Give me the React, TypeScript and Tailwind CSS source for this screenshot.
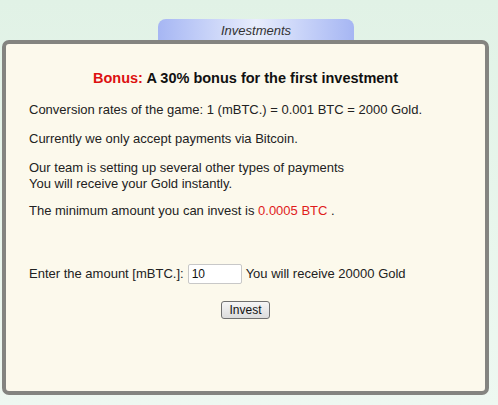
import React, { useState } from 'react'

export default function App() {
  const [amount, setAmount] = useState('10')
  const gold = (parseFloat(amount) || 0) * 2000

  return (
    <div className="min-h-[405px] w-full bg-gradient-to-b from-[#e1f2e6] to-[#eef8f1] pt-[19px] pl-[2px] font-['Liberation_Sans',Arial,sans-serif] text-[13px] leading-[16px] text-[#222]">
      <div className="ml-[156px] flex h-[22px] w-[196px] items-center justify-center rounded-t-[8px] bg-gradient-to-r from-[#a6b6f3] via-[#e8edfc] to-[#a6b6f3] pt-[1px] text-[13px] italic text-[#333]">
        Investments
      </div>
      <div className="-mt-[1px] h-[355px] w-[487px] rounded-[7px] border-4 border-[#848480] bg-[#fcf9ec] pl-[23px]">
        <p className="mt-[26px] text-center pr-[23px] text-[14.5px] font-bold leading-[17px] text-[#111]">
          <span className="text-[#dd1111]">Bonus:</span> A 30% bonus for the first investment
        </p>
        <p className="mt-[15px]">Conversion rates of the game: 1 (mBTC.) = 0.001 BTC = 2000 Gold.</p>
        <p className="mt-[13px]">Currently we only accept payments via Bitcoin.</p>
        <p className="mt-[13px]">
          Our team is setting up several other types of payments
          <br />
          You will receive your Gold instantly.
        </p>
        <p className="mt-[11px]">
          The minimum amount you can invest is <span className="text-[#e01b1b]">0.0005 BTC</span> .
        </p>
        <div className="mt-[45px] flex items-center">
          <span>Enter the amount [mBTC.]:</span>
          <input
            value={amount}
            onChange={e => setAmount(e.target.value)}
            className="ml-[4px] h-[20px] w-[54px] rounded-[2px] border border-[#c8c8c8] bg-white px-[3px] text-[12px] text-[#111] outline-none"
          />
          <span className="ml-[4px]">You will receive {gold} Gold</span>
        </div>
        <div className="mt-[17px] flex justify-center pr-[23px]">
          <button className="h-[18px] rounded-[3px] border border-[#707070] bg-gradient-to-b from-[#f6f6f6] to-[#dcdcdc] px-[7px] text-[12px] leading-[14px] text-[#111]">
            Invest
          </button>
        </div>
      </div>
    </div>
  )
}
